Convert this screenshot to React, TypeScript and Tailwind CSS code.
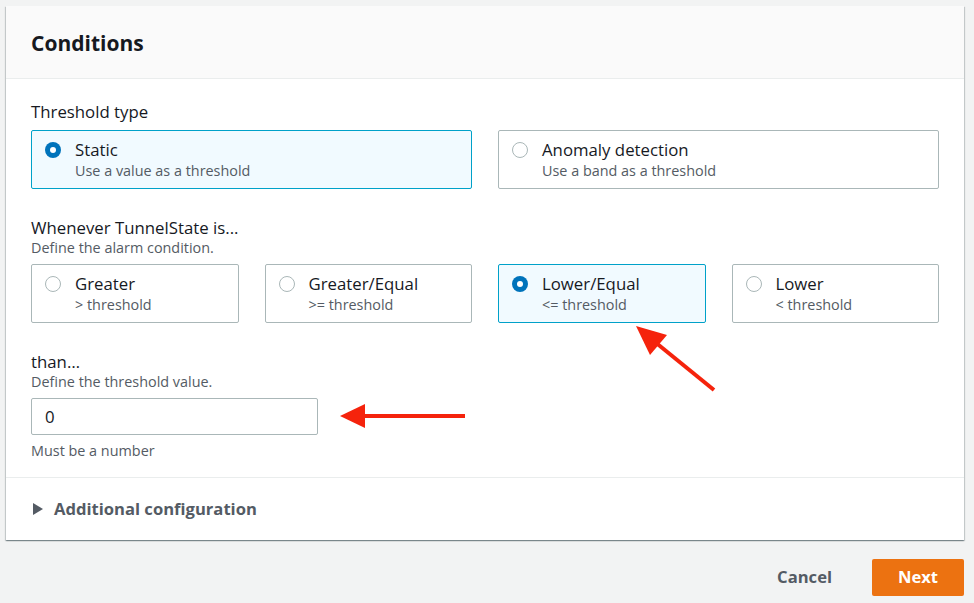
import React from 'react';

const font = { fontFamily: '"Open Sans", "Liberation Sans", sans-serif' };

interface TileProps {
  label: string;
  description: string;
  selected?: boolean;
}

const Radio: React.FC<{ selected?: boolean }> = ({ selected }) =>
  selected ? (
    <span className="mt-[4px] flex h-4 w-4 shrink-0 items-center justify-center rounded-full bg-[#0073bb]">
      <span className="h-[6px] w-[6px] rounded-full bg-white" />
    </span>
  ) : (
    <span className="mt-[4px] h-4 w-4 shrink-0 rounded-full border border-[#aab7b8] bg-white" />
  );

const Tile: React.FC<TileProps> = ({ label, description, selected }) => (
  <div
    className={`flex gap-[14px] rounded-[2px] border px-[13px] py-[7px] ${
      selected ? 'border-[#00a1c9] bg-[#f1faff]' : 'border-[#aab7b8] bg-white'
    }`}
  >
    <Radio selected={selected} />
    <div className="flex flex-col">
      <span className="text-[16.8px] leading-[23px] text-[#16191f]">{label}</span>
      <span className="text-[14.4px] leading-[20px] text-[#545b64]">{description}</span>
    </div>
  </div>
);

export default function App() {
  return (
    <div className="relative min-h-[603px] w-full bg-[#f2f3f3] px-[6px] pt-[6px]" style={font}>
      {/* Card */}
      <div className="w-[958px] bg-white shadow-[0_1px_1px_0_rgba(0,28,36,0.3),1px_1px_1px_0_rgba(0,28,36,0.15),-1px_1px_1px_0_rgba(0,28,36,0.15)]">
        <div className="h-[73px] border-b border-[#eaeded] bg-[#fafafa] px-[25px] pt-[22px]">
          <h2 className="text-[21px] font-bold leading-[30px] text-[#16191f]">Conditions</h2>
        </div>

        <div className="px-[25px] pt-[22px] pb-[17px]">
          <div className="text-[16.8px] leading-[22px] text-[#16191f]">Threshold type</div>
          <div className="mt-[7px] grid grid-cols-2 gap-[26px]">
            <Tile label="Static" description="Use a value as a threshold" selected />
            <Tile label="Anomaly detection" description="Use a band as a threshold" />
          </div>

          <div className="mt-[28px] text-[16.8px] leading-[22px] text-[#16191f]">Whenever TunnelState is...</div>
          <div className="text-[14.4px] leading-[18px] text-[#545b64]">Define the alarm condition.</div>
          <div className="mt-[7px] grid grid-cols-4 gap-[26px]">
            <Tile label="Greater" description="> threshold" />
            <Tile label="Greater/Equal" description=">= threshold" />
            <Tile label="Lower/Equal" description="<= threshold" selected />
            <Tile label="Lower" description="< threshold" />
          </div>

          <div className="mt-[28px] text-[16.8px] leading-[22px] text-[#16191f]">than…</div>
          <div className="text-[14.4px] leading-[18px] text-[#545b64]">Define the threshold value.</div>
          <input
            readOnly
            value="0"
            className="mt-[7px] block h-[37px] w-[287px] rounded-[2px] border border-[#aab7b8] px-[13px] text-[16.8px] text-[#16191f] outline-none"
            style={font}
          />
          <div className="mt-[7px] text-[14.4px] leading-[18px] text-[#545b64]">Must be a number</div>
        </div>

        <div className="flex h-[63px] items-center gap-[10px] border-t border-[#eaeded] px-[26px]">
          <svg width="12" height="14" viewBox="0 0 12 14">
            <path d="M1 1 L11 7 L1 13 Z" fill="#545b64" />
          </svg>
          <span className="text-[16.6px] font-bold text-[#545b64]">Additional configuration</span>
        </div>
      </div>

      {/* Footer */}
      <div className="mt-[19px] flex w-[958px] items-center justify-end gap-[40px]">
        <button className="text-[16.6px] font-bold text-[#545b64]" style={font}>Cancel</button>
        <button
          className="h-[37px] w-[92px] rounded-[2px] bg-[#ec7211] text-[16.6px] font-bold text-white"
          style={font}
        >
          Next
        </button>
      </div>

      {/* Annotation arrows */}
      <svg className="pointer-events-none absolute left-0 top-0" width="974" height="603">
        <line x1="714" y1="390" x2="655" y2="342" stroke="#f5230c" strokeWidth="4" />
        <polygon points="636,326 667,335 650,355" fill="#f5230c" />
        <line x1="465" y1="416" x2="360" y2="416" stroke="#f5230c" strokeWidth="4" />
        <polygon points="340,416 365,404 365,428" fill="#f5230c" />
      </svg>
    </div>
  );
}
